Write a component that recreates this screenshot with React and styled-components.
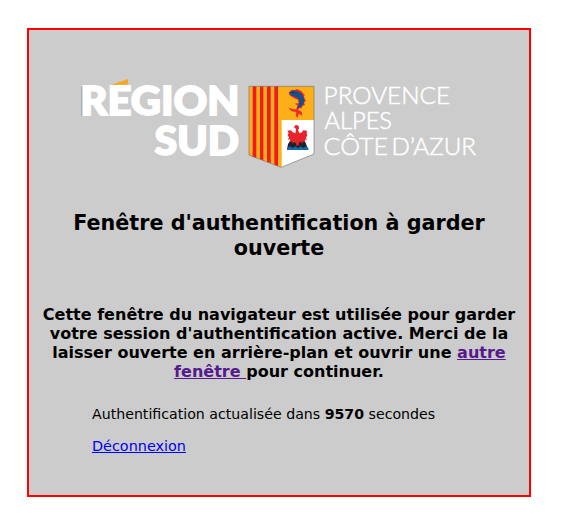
import React from "react";
import styled, { createGlobalStyle } from "styled-components";

const GlobalStyle = createGlobalStyle`
  body {
    margin: 0;
    background: #fff;
    color: #000;
    font-family: "DejaVu Sans", Verdana, sans-serif;
    font-size: 14px;
  }
`;

const Panel = styled.main`
  box-sizing: border-box;
  width: 504px;
  height: 469px;
  margin: 28px 0 0 27px;
  padding: 48px 10px 0;
  border: 2px solid #f00;
  background: #ccc;
`;

const Logo = styled.svg`
  display: block;
  margin: 0 auto;
  overflow: visible;
`;

const BrandText = styled.text`
  fill: #fff;
  stroke: #fff;
  stroke-width: 1.8px;
  font-family: Lato, sans-serif;
  font-size: 39.2px;
  font-weight: 900;
`;

const RegionText = styled.text`
  fill: #fff;
  stroke: #fff;
  stroke-width: 0.5px;
  font-family: Lato, sans-serif;
  font-size: 24.4px;
  font-weight: 300;
`;

const Title = styled.h2`
  margin: 41px 0 0;
  font-size: 20.7px;
  line-height: 25px;
  text-align: center;
`;

const Notice = styled.h3`
  margin: 44px 0 0;
  font-size: 16.03px;
  line-height: 19px;
  text-align: center;
`;

const NoticeLink = styled.a`
  color: #551a8b;
  text-decoration: underline;
`;

const Details = styled.section`
  margin: 25px 0 0 53px;
  font-size: 14.16px;
  line-height: 16px;
`;

const Status = styled.p`
  margin: 0 0 16px;
`;

const LogoutLink = styled.a`
  color: #00e;
  font-size: 14.4px;
  text-decoration: underline;
`;

function RegionLogo() {
  return (
    <Logo width="400" height="92" viewBox="0 0 400 92" role="img" aria-label="Région Sud">
      <path d="M2.600 9v29" stroke="#999" strokeWidth=".7" />
      <BrandText x="1.500" y="37.300" textLength="159" lengthAdjust="spacingAndGlyphs">REGION</BrandText>
      <BrandText x="75.500" y="76.600" textLength="84.500" lengthAdjust="spacingAndGlyphs">SUD</BrandText>
      <path d="M32 7 49 1v5.500z" fill="#faa61a" />
      <g transform="translate(161 -3) scale(.33333)">
        <path d="M27 34h195v203l-98 40-97-37z" fill="#fcaf17" />
        <path
          d="M38 34h11v215l-11-4zM60 34h10v223l-10-4zM81 34h11v231l-11-4zM103 34h11v240l-11-4z"
          fill="#ed1c24"
        />
        <path d="M125 135h97v102l-97 40z" fill="#fff" />
        <path d="M27 34h195v203l-98 40-97-37z" fill="none" stroke="#777" strokeWidth="2" />

        <path
          d="M146 53 155 44 164 46 170 42 184 48 194 60 192 66 198 78 192 82 195 90 187 93 185 101 179 98 174 104 185 110 187 122 176 116 173 128 167 122 169 111 155 109 145 98 160 103 169 103 172 91 164 86 176 84 173 74 160 68 148 60z"
          fill="#ee2b28"
        />
        <path
          d="M147 54 156 47 170 47 184 55 192 69 193 81 188 91 179 98 170 101 176 89 178 77 173 69 165 65 155 62z"
          fill="#17508b"
        />
        <path d="M154 52H164L168 56" fill="none" stroke="#17375e" strokeWidth="3" />

        <path d="M141 224 144 207 153 194 162 202 170 191 179 199 188 191 197 204 205 224z" fill="#1d222c" />
        <path
          d="M161 157 168 149 176 153 177 161 174 164 178 175 186 172 190 166 201 167 200 176 202 181 198 188 201 195 195 193 196 202 188 199 187 208 181 199 177 205 175 212 170 212 167 204 162 199 159 208 156 199 149 202 151 193 144 195 147 187 143 181 146 174 142 167 153 166 158 172 166 175 168 164 166 159z"
          fill="#e8232a"
        />
        <path d="M142 219 150 214 158 219 166 214 174 219 182 214 190 219 198 214 205 219V225H142z" fill="#1769a2" />
      </g>
      <RegionText x="244.600" y="26" textLength="126.500" lengthAdjust="spacingAndGlyphs">PROVENCE</RegionText>
      <RegionText x="245.500" y="51" textLength="67.500" lengthAdjust="spacingAndGlyphs">ALPES</RegionText>
      <RegionText x="244.500" y="77" textLength="64.500" lengthAdjust="spacingAndGlyphs">CÔTE</RegionText>
      <RegionText x="312.500" y="77" textLength="84.500" lengthAdjust="spacingAndGlyphs">D’AZUR</RegionText>
    </Logo>
  );
}

export default function App() {
  return (
    <>
      <GlobalStyle />
      <Panel>
        <RegionLogo />
        <Title>Fenêtre d'authentification à garder ouverte</Title>
        <Notice>
          Cette fenêtre du navigateur est utilisée pour garder votre session
          d'authentification active. Merci de la laisser ouverte en arrière-plan
          et ouvrir une <NoticeLink href="#">autre fenêtre </NoticeLink>pour continuer.
        </Notice>
        <Details>
          <Status>
            Authentification actualisée dans <strong>9570</strong> secondes
          </Status>
          <LogoutLink href="#">Déconnexion</LogoutLink>
        </Details>
      </Panel>
    </>
  );
}
